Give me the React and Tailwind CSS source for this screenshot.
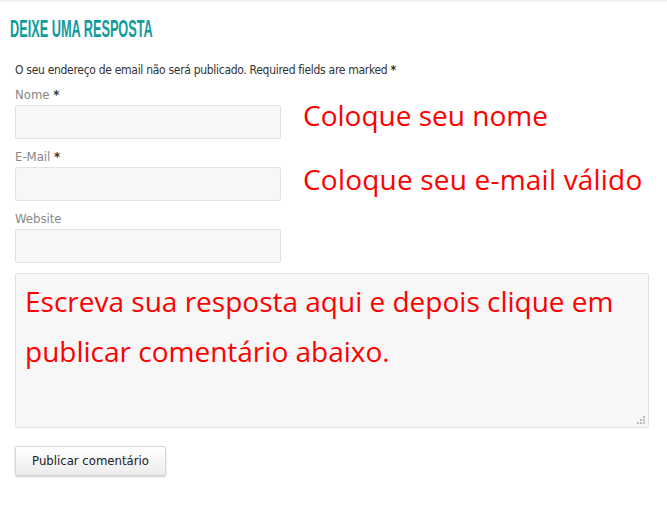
export default function App() {
  const label = "block text-[13px] text-[#888] leading-none mb-[4px] [font-family:'DejaVu_Sans_Condensed',sans-serif]";
  const field = "w-[266px] h-[34px] bg-[#f7f7f7] border border-[#e3e3e3] rounded-[2px]";
  const red = "text-[#ff0000] text-[28px] leading-none [font-family:'Open_Sans',sans-serif]";

  return (
    <div className="w-[667px] h-[512px] bg-white border-t-2 border-[#f0f0f0] [font-family:'DejaVu_Sans_Condensed',sans-serif]">
      <div className="pl-[10px] pt-[15px]">
        <h3 className="text-[24px] font-bold uppercase text-[#119b9b] leading-none origin-left scale-x-[0.53] [font-family:'Liberation_Sans',sans-serif]">
          Deixe uma resposta
        </h3>
      </div>
      <p className="pl-[15px] mt-[23px] text-[12px] text-[#333] leading-none tracking-[-0.3px]">
        O seu endereço de email não será publicado. Required fields are marked <span className="font-bold">*</span>
      </p>

      <div className="pl-[15px] mt-[12px] flex flex-col gap-[11px]">
        <div className="flex items-end">
          <div>
            <label className={label}>Nome <span className="text-[#333] font-bold">*</span></label>
            <div className={field}></div>
          </div>
          <span className={`${red} ml-[22px] mb-[10px]`}>Coloque seu nome</span>
        </div>
        <div className="flex items-end">
          <div>
            <label className={label}>E-Mail <span className="text-[#333] font-bold">*</span></label>
            <div className={field}></div>
          </div>
          <span className={`${red} ml-[22px] mb-[8px] tracking-[0.2px]`}>Coloque seu e-mail válido</span>
        </div>
        <div>
          <label className={label}>Website</label>
          <div className={field}></div>
        </div>
      </div>

      <div className="ml-[15px] mt-[10px] relative w-[634px] h-[155px] bg-[#f7f7f7] border border-[#e3e3e3] rounded-[2px] px-[9px] pt-[2px]">
        <p className="text-[#ff0000] text-[28px] leading-[50px] [font-family:'Open_Sans',sans-serif]">
          Escreva sua resposta aqui e depois clique em publicar comentário abaixo.
        </p>
        <svg className="absolute right-[2px] bottom-[2px]" width="10" height="10" viewBox="0 0 10 10">
          <rect x="7" y="1" width="2" height="2" fill="#bbb" />
          <rect x="4" y="4" width="2" height="2" fill="#bbb" />
          <rect x="7" y="4" width="2" height="2" fill="#bbb" />
          <rect x="1" y="7" width="2" height="2" fill="#bbb" />
          <rect x="4" y="7" width="2" height="2" fill="#bbb" />
          <rect x="7" y="7" width="2" height="2" fill="#bbb" />
        </svg>
      </div>

      <button className="ml-[15px] mt-[18px] w-[151px] h-[30px] bg-gradient-to-b from-white to-[#ececec] border border-[#d6d6d6] rounded-[2px] shadow-[0_1px_2px_rgba(0,0,0,0.2)] text-[13px] text-[#222]">
        Publicar comentário
      </button>
    </div>
  );
}
